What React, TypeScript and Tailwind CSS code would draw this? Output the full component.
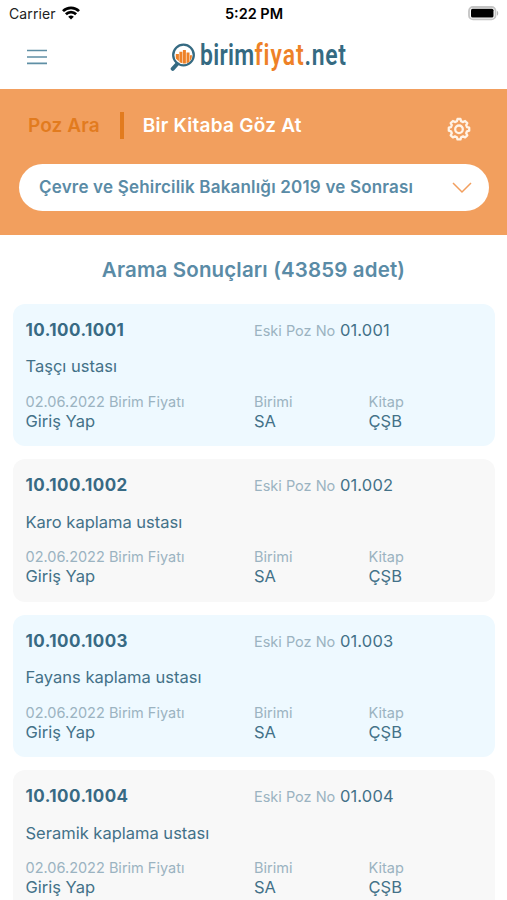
type Poz = {
  no: string;
  eskiNo: string;
  name: string;
};

const POZLAR: Poz[] = [
  { no: "10.100.1001", eskiNo: "01.001", name: "Taşçı ustası" },
  { no: "10.100.1002", eskiNo: "01.002", name: "Karo kaplama ustası" },
  { no: "10.100.1003", eskiNo: "01.003", name: "Fayans kaplama ustası" },
  { no: "10.100.1004", eskiNo: "01.004", name: "Seramik kaplama ustası" },
];

function StatusBar() {
  return (
    <div className="grid h-7 shrink-0 grid-cols-3 items-center pl-[9px] pr-2 text-black">
      <div className="flex items-center gap-1.5">
        <span className="text-[14px] leading-5 tracking-[0.1px] text-[#222]">Carrier</span>
        <svg className="-mt-0.5" width="18" height="14" viewBox="0 0 18 14" fill="none" stroke="#000" strokeWidth="2.7">
          <path d="M1 5.1a11.3 11.3 0 0 1 16 0" />
          <path d="M3.9 8.2a7.2 7.2 0 0 1 10.2 0" />
          <path d="M9 13.6 6.2 10.8a4 4 0 0 1 5.6 0z" fill="#000" stroke="none" />
        </svg>
      </div>
      <span className="text-center text-[14.5px] font-semibold leading-5">5:22 PM</span>
      <svg className="justify-self-end" width="31" height="16" viewBox="0 0 31 16">
        <rect x="1" y="1" width="26.5" height="12.4" rx="4" fill="#fff" stroke="#c4c4c4" strokeWidth="1.8" />
        <rect x="3" y="2.8" width="22.5" height="8.8" rx="1.5" fill="#000" />
        <path d="M29 4.7c1.6.7 1.6 4.3 0 5z" fill="#b5b5b5" />
      </svg>
    </div>
  );
}

function Logo() {
  return (
    <div className="flex items-start">
      <svg width="30" height="36" viewBox="0 0 30 36">
        <path d="m8.5 20.5-5.8 6.3" stroke="#356a82" strokeWidth="4" strokeLinecap="round" />
        <circle cx="13.5" cy="13" r="10.3" fill="#fff" stroke="#356a82" strokeWidth="2.3" />
        <path
          d="M5.8 12h3.100v7.300L5.800 16.500zM9.400 9.700h3v11.600l-3-1.100zM12.900 7.900h3v13.600h-3zM16.500 10.600h3v9.300l-3 1.400zM20 13.200h2l-.4 3.200-1.600 2.700z"
          fill="#ee8127"
        />
      </svg>
      <p className="flex h-9 origin-left scale-x-[0.79] whitespace-nowrap font-[Roboto,sans-serif] text-[29px] font-semibold leading-[26px] tracking-[0.4px] text-[#356a82] [font-variant-ligatures:none]">
        <span>birim</span>
        <span className="tracking-[1.2px] text-[#ee8127]">fiyat</span>
        <span className="tracking-[0.9px]">.net</span>
      </p>
    </div>
  );
}

function Gear() {
  return (
    <svg width="26" height="26" viewBox="0 0 26 26" fill="none" stroke="#fff3e6" strokeWidth="2.3" strokeLinejoin="round">
      <path d="M10.9 4.2 11.5 2h3l.6 2.200 2 .9 2-1.100 2.200 2.100-1.100 2 .8 2 2.200.6v3l-2.200.6-.8 2 1.100 2-2.200 2.100-2-1.100-2 .9-.6 2.200h-3l-.6-2.200-2-.9-2 1.100-2.200-2.100 1.100-2-.8-2-2.200-.6v-3l2.200-.6.8-2-1.100-2L6.900 4l2 1.100z" />
      <circle cx="13" cy="12.3" r="3.8" />
    </svg>
  );
}

function SearchPanel() {
  return (
    <section className="h-[146px] shrink-0 bg-[#f29f5e] px-[19px] pt-[23px]">
      <div className="flex h-[30px] items-center pl-[9px] pr-4 text-[19px] font-semibold">
        <span className="tracking-[0.1px] text-[#e27b1e]">Poz Ara</span>
        <span className="-mt-0.5 ml-5 mr-[19px] h-[27px] w-1 bg-[#e27b1e]" />
        <span className="tracking-[0.25px] text-white">Bir Kitaba Göz At</span>
        <span className="ml-auto mt-1.5">
          <Gear />
        </span>
      </div>
      <button className="mt-[22px] flex h-[47px] w-[470px] items-center justify-between rounded-full bg-white pl-5 pr-4 pt-0.5 text-[17px] font-semibold tracking-[0.19px] text-[#5a8ba6]">
        <span>Çevre ve Şehircilik Bakanlığı 2019 ve Sonrası</span>
        <svg width="22" height="14" viewBox="0 0 22 14" fill="none" stroke="#f29f5e" strokeWidth="1.5">
          <path d="m2 2 9 9 9-9" />
        </svg>
      </button>
    </section>
  );
}

function Field({ label, value }: { label: string; value: string }) {
  return (
    <div>
      <p className="text-[14.5px] leading-[18px] text-[#9bb3c1]">{label}</p>
      <p className="text-[16.5px] leading-5">{value}</p>
    </div>
  );
}

function PozCard({ poz }: { poz: Poz }) {
  return (
    <article className="h-[142.5px] shrink-0 rounded-xl bg-[#f8f8f8] px-[12.5px] pt-4 text-[#437188] odd:bg-[#eef9ff]">
      <div className="grid grid-cols-[228.5px_1fr] leading-5">
        <h2 className="text-[17px] font-bold tracking-[0.45px] text-[#386a84]">{poz.no}</h2>
        <p className="text-[16.5px]">
          <span className="text-[14.5px] text-[#9bb3c1]">Eski Poz No</span>{" "}
          <span className="tracking-[0.15px]">{poz.eskiNo}</span>
        </p>
      </div>
      <p className="mt-[15.5px] text-[16.5px] leading-5">{poz.name}</p>
      <div className="mt-[16.5px] grid grid-cols-[228.5px_114.5px_1fr]">
        <Field label="02.06.2022 Birim Fiyatı" value="Giriş Yap" />
        <Field label="Birimi" value="SA" />
        <Field label="Kitap" value="ÇŞB" />
      </div>
    </article>
  );
}

export default function App() {
  return (
    <div className="flex h-[900px] w-[507px] flex-col overflow-hidden bg-white font-[Inter,sans-serif]">
      <StatusBar />
      <header className="flex h-[60.5px] shrink-0 items-start pl-[27px] pt-[14px]">
        <svg className="mt-[7px]" width="20" height="16" viewBox="0 0 20 16" stroke="#5f8fa5" strokeWidth="1.7">
          <path d="M0 1.5h20M0 8h20M0 14.3h20" />
        </svg>
        <div className="ml-[122.5px]">
          <Logo />
        </div>
      </header>
      <SearchPanel />
      <h1 className="mt-[21px] text-center text-[20.5px] font-semibold leading-7 tracking-[0.15px] text-[#5a8ba6]">
        Arama Sonuçları (43859 adet)
      </h1>
      <main className="mt-5 flex flex-col gap-[13px] pl-[13px] pr-3">
        {POZLAR.map((poz) => (
          <PozCard key={poz.no} poz={poz} />
        ))}
      </main>
    </div>
  );
}
